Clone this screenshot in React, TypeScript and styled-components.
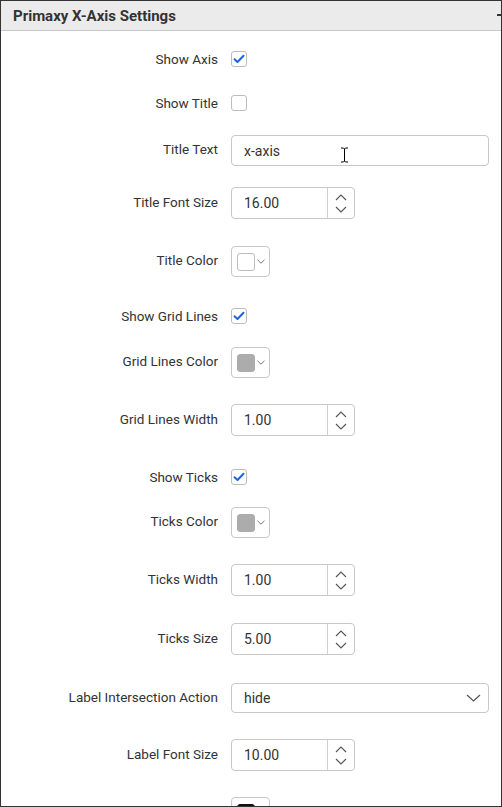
import React from "react";
import styled, { createGlobalStyle } from "styled-components";

const GlobalStyle = createGlobalStyle`
  html, body { margin: 0; padding: 0; background: #fff; }
  body { font-family: Roboto, "Liberation Sans", Arial, sans-serif; }
  * { box-sizing: border-box; }
`;

const Frame = styled.div`
  width: 502px;
  height: 807px;
  border: 1px solid #333;
  overflow: hidden;
  background: #fff;
  display: flex;
  flex-direction: column;
`;

const Header = styled.div`
  height: 30px;
  flex: none;
  background: #ebebeb;
  border-bottom: 1px solid #c8c8c8;
  display: flex;
  align-items: center;
  padding-left: 12px;
  font-weight: 700;
  font-size: 15px;
  color: #333;
`;

const HeaderTitle = styled.span`
  flex: 1;
`;

const CollapseMark = styled.span`
  width: 4px;
  height: 2px;
  background: #333;
  margin-top: -2px;
`;

const Body = styled.div`
  display: flex;
  flex-direction: column;
  padding: 20px 12px 0 0;
`;

const Row = styled.div<{ $space: number; $h: number }>`
  display: grid;
  grid-template-columns: 217px 1fr;
  column-gap: 12px;
  align-items: center;
  margin-top: ${(p) => p.$space}px;
  min-height: ${(p) => p.$h}px;
  flex: none;
`;

const Label = styled.div<{ $shift: number }>`
  text-align: right;
  font-size: 13.5px;
  color: #333;
  line-height: 16px;
  white-space: nowrap;
  margin-top: ${(p) => p.$shift * 2}px;
`;

const Control = styled.div`
  display: flex;
  align-items: center;
  position: relative;
`;

const CheckBox = styled.span`
  width: 16px;
  height: 16px;
  border: 1px solid #bdbdbd;
  border-radius: 3px;
  background: #fff;
  display: flex;
  align-items: center;
  justify-content: center;
  margin-left: 1px;
`;

const TextBox = styled.div<{ $w?: number }>`
  height: ${(p) => (p.$w ? 32 : 31)}px;
  width: ${(p) => (p.$w ? `${p.$w}px` : "100%")};
  border: 1px solid #c8c8c8;
  border-radius: 4px;
  display: flex;
  align-items: center;
  padding-left: 12px;
  font-size: 14px;
  color: #333;
  background: #fff;
  position: relative;
  margin-left: 1px;
`;

const Value = styled.span`
  flex: 1;
`;

const Spinner = styled.div`
  width: 27px;
  height: 100%;
  border-left: 1px solid #d0d0d0;
  display: flex;
  flex-direction: column;
  align-items: center;
  justify-content: center;
  gap: 5px;
`;

const SelectBox = styled.div`
  height: 30px;
  width: 100%;
  border: 1px solid #c8c8c8;
  border-radius: 4px;
  display: flex;
  align-items: center;
  padding: 0 7px 0 12px;
  font-size: 14px;
  color: #333;
  margin-left: 1px;
`;

const ColorBtn = styled.div`
  width: 39px;
  height: 31px;
  border: 1px solid #c8c8c8;
  border-radius: 4px;
  display: flex;
  align-items: center;
  padding-left: 5px;
  gap: 2px;
  background: #fff;
  margin-left: 1px;
`;

const Swatch = styled.span<{ $c: string }>`
  width: 18px;
  height: 18px;
  border-radius: 3px;
  background: ${(p) => p.$c};
  border: 1px solid ${(p) => (p.$c === "#ffffff" ? "#bdbdbd" : p.$c)};
`;

const Cursor = styled.svg`
  position: absolute;
  left: 108px;
  top: 11px;
`;

const Check = () => (
  <svg width="12" height="10" viewBox="0 0 12 10">
    <path d="M1.5 5.2 L4.5 8 L10.5 1.8" fill="none" stroke="#1f63e0" strokeWidth="2" strokeLinecap="round" strokeLinejoin="round" />
  </svg>
);

const Up = () => (
  <svg width="12" height="7" viewBox="0 0 12 7">
    <path d="M1 6 L6 1 L11 6" fill="none" stroke="#555" strokeWidth="1.1" />
  </svg>
);
const Down = () => (
  <svg width="12" height="7" viewBox="0 0 12 7">
    <path d="M1 1 L6 6 L11 1" fill="none" stroke="#555" strokeWidth="1.1" />
  </svg>
);
const SmallDown = () => (
  <svg width="8" height="5" viewBox="0 0 8 5">
    <path d="M0.5 0.8 L4 4.2 L7.5 0.8" fill="none" stroke="#666" strokeWidth="0.9" />
  </svg>
);
const BigDown = () => (
  <svg width="15" height="8" viewBox="0 0 15 8">
    <path d="M1 1 L7.5 7 L14 1" fill="none" stroke="#555" strokeWidth="1.2" />
  </svg>
);

type Item =
  | { kind: "check"; label: string; checked: boolean; space: number }
  | { kind: "text"; label: string; value: string; space: number }
  | { kind: "num"; label: string; value: string; space: number }
  | { kind: "color"; label: string; color: string; space: number }
  | { kind: "select"; label: string; value: string; space: number };

const items: Item[] = [
  { kind: "check", label: "Show Axis", checked: true, space: 0 },
  { kind: "check", label: "Show Title", checked: false, space: 28 },
  { kind: "text", label: "Title Text", value: "x-axis", space: 24 },
  { kind: "num", label: "Title Font Size", value: "16.00", space: 21 },
  { kind: "color", label: "Title Color", color: "#ffffff", space: 27 },
  { kind: "check", label: "Show Grid Lines", checked: true, space: 31 },
  { kind: "color", label: "Grid Lines Color", color: "#acacac", space: 23 },
  { kind: "num", label: "Grid Lines Width", value: "1.00", space: 26 },
  { kind: "check", label: "Show Ticks", checked: true, space: 33 },
  { kind: "color", label: "Ticks Color", color: "#acacac", space: 22 },
  { kind: "num", label: "Ticks Width", value: "1.00", space: 26 },
  { kind: "num", label: "Ticks Size", value: "5.00", space: 27 },
  { kind: "select", label: "Label Intersection Action", value: "hide", space: 28 },
  { kind: "num", label: "Label Font Size", value: "10.00", space: 26 },
  { kind: "color", label: "", color: "#111111", space: 26 },
];

const heights: Record<Item["kind"], number> = {
  check: 16,
  text: 31,
  num: 32,
  color: 31,
  select: 30,
};

function renderControl(it: Item) {
  switch (it.kind) {
    case "check":
      return <CheckBox>{it.checked && <Check />}</CheckBox>;
    case "text":
      return (
        <TextBox>
          <Value>{it.value}</Value>
          <Cursor width="9" height="16" viewBox="0 0 9 16">
            <path d="M1 1 H3.5 L4.5 2 L5.5 1 H8 M4.5 2 V14 M1 15 H3.5 L4.5 14 L5.5 15 H8" fill="none" stroke="#fff" strokeWidth="2.4" />
            <path d="M1 1 H3.5 L4.5 2 L5.5 1 H8 M4.5 2 V14 M1 15 H3.5 L4.5 14 L5.5 15 H8" fill="none" stroke="#000" strokeWidth="1" />
          </Cursor>
        </TextBox>
      );
    case "num":
      return (
        <TextBox $w={124}>
          <Value>{it.value}</Value>
          <Spinner>
            <Up />
            <Down />
          </Spinner>
        </TextBox>
      );
    case "color":
      return (
        <ColorBtn>
          <Swatch $c={it.color} />
          <SmallDown />
        </ColorBtn>
      );
    case "select":
      return (
        <SelectBox>
          <Value>{it.value}</Value>
          <BigDown />
        </SelectBox>
      );
  }
}

export default function App() {
  return (
    <>
      <GlobalStyle />
      <Frame>
        <Header>
          <HeaderTitle>Primaxy X-Axis Settings</HeaderTitle>
          <CollapseMark />
        </Header>
        <Body>
          {items.map((it, i) => (
            <Row key={i} $space={it.space} $h={heights[it.kind]}>
              <Label $shift={it.kind === "check" ? 0 : -1.5}>{it.label}</Label>
              <Control>{renderControl(it)}</Control>
            </Row>
          ))}
        </Body>
      </Frame>
    </>
  );
}
